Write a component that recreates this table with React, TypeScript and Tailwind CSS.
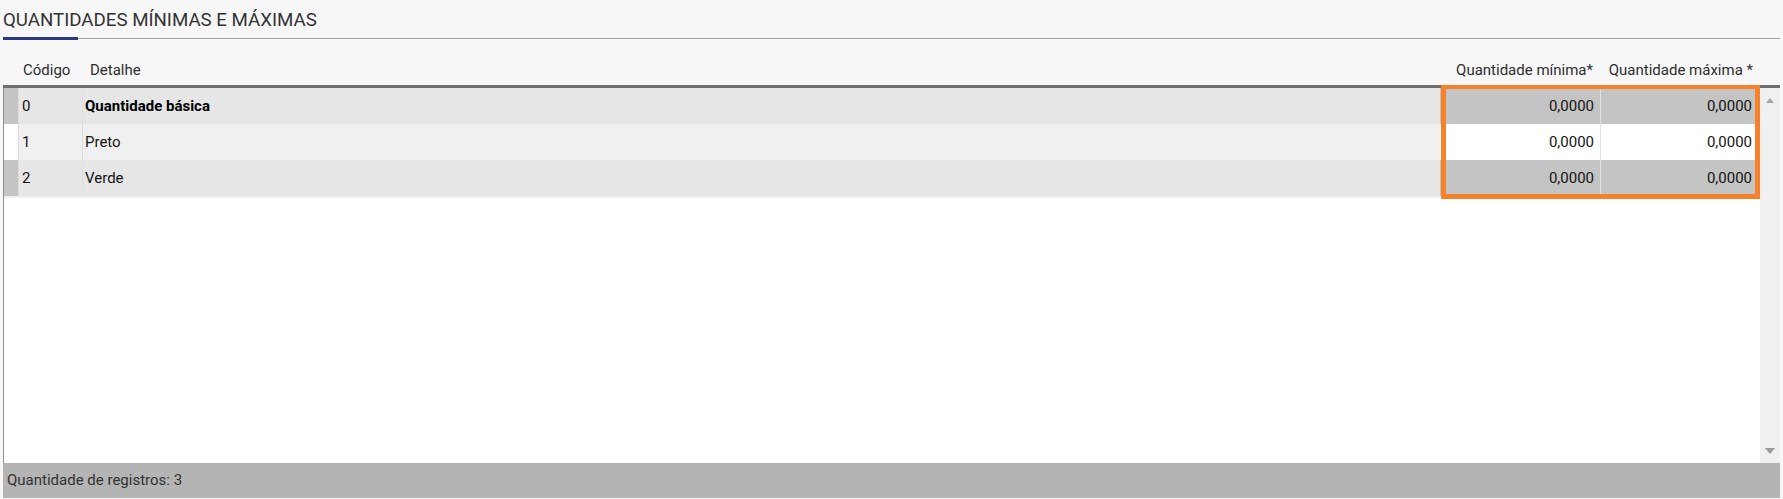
import React from "react";

type Linha = {
  codigo: string;
  detalhe: string;
  minima: string;
  maxima: string;
  destaque?: boolean;
};

const linhas: Linha[] = [
  { codigo: "0", detalhe: "Quantidade básica", minima: "0,0000", maxima: "0,0000", destaque: true },
  { codigo: "1", detalhe: "Preto", minima: "0,0000", maxima: "0,0000" },
  { codigo: "2", detalhe: "Verde", minima: "0,0000", maxima: "0,0000" },
];

export default function App() {
  return (
    <div className="h-[499px] w-full bg-[#f7f7f7] px-[3px] font-['Roboto',sans-serif] text-[15px] text-[#333]">
      {/* Tab title */}
      <div className="h-[37px] pt-[9px] text-[18.7px] leading-[22px] text-[#333]">QUANTIDADES MÍNIMAS E MÁXIMAS</div>
      <div className="flex h-[3px] items-center">
        <div className="h-[3px] w-[75px] bg-[#2c3786]" />
        <div className="h-px flex-1 bg-[#a3a3a3]" />
      </div>

      {/* Column headers */}
      <div className="flex h-[45px] items-end pb-[6px] leading-[17px] text-[#2e2e2e]">
        <div className="w-[15px] shrink-0" />
        <div className="w-[64px] shrink-0 pl-[5px]">Código</div>
        <div className="flex-1 pl-[8px]">Detalhe</div>
        <div className="w-[160px] shrink-0 pr-[7px] text-right">Quantidade mínima*</div>
        <div className="w-[160px] shrink-0 pr-[7px] text-right">Quantidade máxima *</div>
        <div className="w-[20px] shrink-0" />
      </div>

      {/* Grid */}
      <div className="relative border-t-[3px] border-[#6e6e6e]">
        <div className="flex h-[375px]">
          <div className="flex flex-1 flex-col border-l border-[#8e8e8e] bg-white">
            {linhas.map((l) => (
              <div key={l.codigo} className="flex h-[36px] leading-[17px] text-[#141414]">
                <div className={`w-[14px] shrink-0 ${l.codigo === "1" ? "bg-white" : "bg-[#c4c4c4]"}`} />
                <div
                  className={`flex w-[64px] shrink-0 items-center border-l border-[#dcdcdc] pl-[3px] ${
                    l.codigo === "1" ? "bg-[#f0f0f0]" : "bg-[#e6e6e6]"
                  }`}
                >
                  {l.codigo}
                </div>
                <div
                  className={`flex flex-1 items-center border-l border-[#dcdcdc] pl-[2px] ${
                    l.codigo === "1" ? "bg-[#f0f0f0]" : "bg-[#e6e6e6]"
                  } ${l.destaque ? "font-bold text-black" : ""}`}
                >
                  {l.detalhe}
                </div>
                <div
                  className={`flex w-[160px] shrink-0 items-center justify-end pr-[6px] ${
                    l.codigo === "1" ? "bg-white" : "bg-[#c4c4c4]"
                  }`}
                >
                  {l.minima}
                </div>
                <div
                  className={`flex w-[160px] shrink-0 items-center justify-end border-l border-[#e2e2e2] pr-[8px] ${
                    l.codigo === "1" ? "bg-white" : "bg-[#c4c4c4]"
                  }`}
                >
                  {l.maxima}
                </div>
              </div>
            ))}
            <div className="h-[2px] bg-[#efefef]" />
            <div className="flex-1 bg-white" />
          </div>

          {/* Scrollbar */}
          <div className="flex w-[20px] shrink-0 flex-col items-center justify-between bg-[#f0f0f0] pb-[9px] pt-[10px]">
            <div className="h-0 w-0 border-x-[4px] border-b-[5px] border-x-transparent border-b-[#a8a8a8]" />
            <div className="h-0 w-0 border-x-[5px] border-t-[6px] border-x-transparent border-t-[#9a9a9a]" />
          </div>
        </div>

        {/* Highlight around the quantity columns */}
        <div className="pointer-events-none absolute right-[20px] top-[-3px] h-[114px] w-[319px] border-[5px] border-t-[4px] border-[#f7812b]" />

        {/* Footer */}
        <div className="flex h-[35px] items-center bg-[#b4b4b4] pl-[4px] leading-[17px] text-[#333]">
          Quantidade de registros: 3
        </div>
      </div>
    </div>
  );
}
